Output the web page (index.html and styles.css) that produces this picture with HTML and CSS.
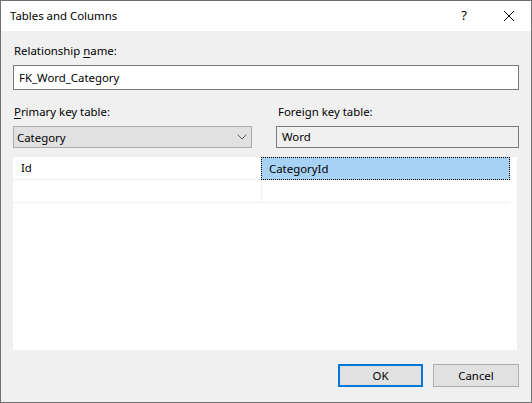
FILE: index.html
```html
<!DOCTYPE html>
<html>
<head>
<meta charset="utf-8">
<link rel="stylesheet" href="styles.css">
</head>
<body>
<div class="window">
  <div class="titlebar">
    <span class="title">Tables and Columns</span>
    <span class="help">?</span>
    <span class="close">
      <svg width="12" height="12" viewBox="0 0 12 12"><path d="M1 1 L11 11 M11 1 L1 11" stroke="#000" stroke-width="1" fill="none"/></svg>
    </span>
  </div>
  <div class="content">
    <div class="label">Relationship <u>n</u>ame:</div>
    <div class="textbox">FK_Word_Category</div>
    <div class="pair">
      <div class="col left">
        <div class="label"><u>P</u>rimary key table:</div>
        <div class="combo">
          <span>Category</span>
          <svg class="chev" width="10" height="6" viewBox="0 0 10 6"><path d="M0.5 0.5 L5 5 L9.5 0.5" stroke="#606060" stroke-width="1" fill="none"/></svg>
        </div>
      </div>
      <div class="col right">
        <div class="label">Foreign key table:</div>
        <div class="readonly">Word</div>
      </div>
    </div>
    <div class="grid">
      <div class="cell">Id</div>
      <div class="cell sel">CategoryId</div>
      <div class="cell"></div>
      <div class="cell"></div>
    </div>
    <div class="buttons">
      <div class="btn default">OK</div>
      <div class="btn">Cancel</div>
    </div>
  </div>
</div>
</body>
</html>
```

FILE: styles.css
```css
html, body {
  margin: 0;
  padding: 0;
}
body {
  font-family: "Noto Sans", "Open Sans", sans-serif;
  font-size: 11.4px;
  color: #000;
}
.window {
  width: 532px;
  height: 403px;
  box-sizing: border-box;
  border: 1px solid #707070;
  background: #f0f0f0;
  display: flex;
  flex-direction: column;
}
.titlebar {
  height: 30px;
  background: #fff;
  display: flex;
  align-items: center;
  flex: none;
}
.title {
  padding-left: 9px;
  flex: 1;
  margin-top: -2px;
}
.help {
  width: 14px;
  text-align: center;
  font-size: 13px;
  margin-right: 32px;
  margin-top: -2px;
}
.close {
  display: flex;
  width: 12px;
  height: 12px;
  margin-right: 16px;
  margin-top: -1px;
}
.content {
  flex: 1;
  padding: 12px 12px 0 12px;
  display: flex;
  flex-direction: column;
}
.label {
  height: 16px;
  line-height: 16px;
  padding-left: 1px;
}
.label u {
  text-underline-offset: 2px;
}
.textbox {
  margin-top: 6px;
  height: 25px;
  box-sizing: border-box;
  border: 1px solid #7a7a7a;
  background: #fff;
  line-height: 23px;
  padding-left: 5px;
}
.pair {
  display: flex;
  gap: 24px;
  margin-top: 14px;
}
.col {
  display: flex;
  flex-direction: column;
}
.left {
  width: 239px;
}
.right {
  width: 243px;
}
.right .label {
  padding-left: 2px;
}
.combo {
  margin-top: 6px;
  height: 22px;
  box-sizing: border-box;
  border: 1px solid #adadad;
  background: #e1e1e1;
  display: flex;
  align-items: center;
  justify-content: space-between;
  padding: 0 4px 0 3px;
}
.readonly {
  margin-top: 6px;
  height: 22px;
  box-sizing: border-box;
  border: 1px solid #7a7a7a;
  background: #f0f0f0;
  line-height: 20px;
  padding-left: 5px;
}
.grid {
  margin-top: 9px;
  height: 193px;
  width: 504px;
  background: #fff;
  display: grid;
  grid-template-columns: 248px 249px;
  grid-template-rows: 23px 23px;
  align-content: start;
}
.cell {
  box-sizing: border-box;
  border-bottom: 1px solid #f0f0f0;
  line-height: 22px;
  padding-left: 8px;
}
.cell:nth-child(2n) {
  border-left: 1px solid #f0f0f0;
}
.cell.sel {
  background: #a8d2f3;
  border: 1px dotted #000;
  padding-left: 7px;
  line-height: 21px;
}
.buttons {
  margin-top: 14px;
  display: flex;
  justify-content: flex-end;
  gap: 10px;
}
.btn {
  width: 86px;
  height: 23px;
  box-sizing: border-box;
  border: 1px solid #adadad;
  background: #e1e1e1;
  text-align: center;
  line-height: 21px;
}
.btn.default {
  width: 85px;
  border: 2px solid #0078d7;
  line-height: 19px;
}
```
